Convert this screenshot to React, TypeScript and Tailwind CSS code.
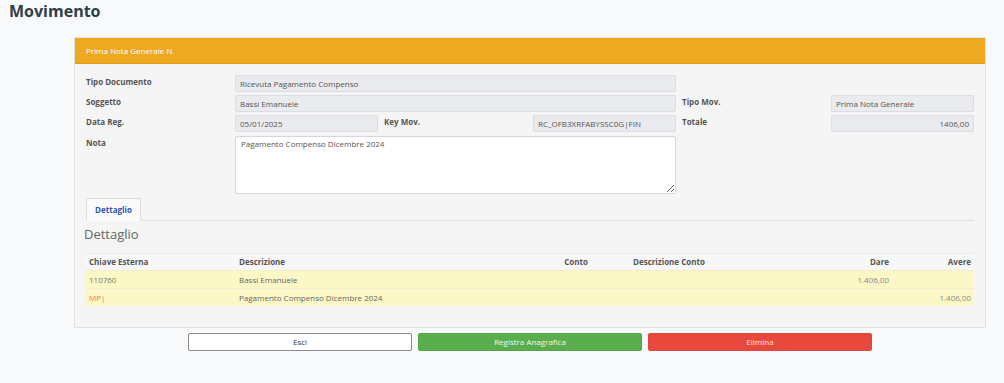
import React from 'react';

const font = { fontFamily: '"Open Sans", "Liberation Sans", sans-serif' };

function Label({ children, className = '' }: { children: React.ReactNode; className?: string }) {
  return (
    <div className={`pt-[1px] text-[8px] leading-[12px] font-bold text-[#555] ${className}`}>{children}</div>
  );
}

function Field({ value, className = '', right = false }: { value: string; className?: string; right?: boolean }) {
  return (
    <div
      className={`h-[17px] flex items-center rounded-[2px] border border-[#dadde1] bg-[#e9ebee] px-[4px] text-[8px] text-[#555] ${right ? 'justify-end' : ''} ${className}`}
    >
      {value}
    </div>
  );
}

export default function App() {
  const rows = [
    { key: '110760', keyColor: 'text-[#777]', desc: 'Bassi Emanuele', dare: '1.406,00', avere: '' },
    { key: 'MP|', keyColor: 'text-[#ee7b52]', desc: 'Pagamento Compenso Dicembre 2024', dare: '', avere: '1.406,00' },
  ];

  return (
    <div style={font} className="min-h-[383px] w-[1004px] bg-[#f8f9fb]">
      <h1 className="pl-[9px] text-[16px] leading-[22px] font-bold text-[#2f3e48]">Movimento</h1>

      <div className="ml-[74px] mt-[15px] w-[912px] border border-[#e2e2e2] bg-[#f5f5f5]">
        {/* header */}
        <div className="h-[26px] flex items-center bg-[#eea920] border-b border-[#e39d12] px-[11px] text-[8px] text-white">
          Prima Nota Generale N.
        </div>

        <div className="px-[11px] pt-[11px] pb-[21px]">
          {/* form */}
          <div className="grid grid-cols-[143px_143px_143px_143px_143px_143px] gap-x-[6px] gap-y-[3px]">
            <Label>Tipo Documento</Label>
            <Field value="Ricevuta Pagamento Compenso" className="col-span-3" />
            <div className="col-span-2" />

            <Label>Soggetto</Label>
            <Field value="Bassi Emanuele" className="col-span-3" />
            <Label>Tipo Mov.</Label>
            <Field value="Prima Nota Generale" />

            <Label>Data Reg.</Label>
            <Field value="05/01/2025" />
            <Label>Key Mov.</Label>
            <Field value="RC_OFB3XRFABYSSC0G|FIN" />
            <Label>Totale</Label>
            <Field value="1406,00" right />

            <Label className="pt-[2px]">Nota</Label>
            <textarea
              readOnly
              defaultValue="Pagamento Compenso Dicembre 2024"
              className="col-span-3 mt-[1px] h-[58px] rounded-[2px] border border-[#d6d6d6] bg-white px-[5px] py-[1px] text-[8px] leading-[12px] text-[#555] outline-none"
            />
          </div>

          {/* tabs */}
          <div className="mt-[4px] flex border-b border-[#dddddd]">
            <div className="-mb-[1px] h-[23px] w-[55px] flex items-center justify-center rounded-t-[2px] border border-[#dddddd] border-b-[#fafafa] bg-[#fafafa] text-[8px] font-bold text-[#2d56b0]">
              Dettaglio
            </div>
          </div>

          <h2 className="mt-[4px] -ml-[2px] text-[13px] leading-[18px] text-[#666]">Dettaglio</h2>

          {/* table */}
          <div className="mt-[10px] text-[8px]">
            <div className="grid grid-cols-[150px_294px_61px_209px_92px_82px] h-[17px] items-center border-t border-[#ebebeb] bg-[#f7f7f7] font-bold text-[#555]">
              <div className="pl-[3px]">Chiave Esterna</div>
              <div className="pl-[3px]">Descrizione</div>
              <div className="pr-[3px] text-right">Conto</div>
              <div className="pl-[42px]">Descrizione Conto</div>
              <div className="pr-[3px] text-right">Dare</div>
              <div className="pr-[3px] text-right">Avere</div>
            </div>
            {rows.map((r, i) => (
              <div
                key={i}
                className="grid grid-cols-[150px_294px_61px_209px_92px_82px] h-[18px] items-center border-t border-[#f1eecf] bg-[#fcf8c6] text-[#666]"
              >
                <div className={`pl-[3px] ${r.keyColor}`}>{r.key}</div>
                <div className="pl-[3px]">{r.desc}</div>
                <div className="pr-[3px] text-right"></div>
                <div className="pl-[42px]"></div>
                <div className="pr-[3px] text-right text-[#888]">{r.dare}</div>
                <div className="pr-[3px] text-right text-[#888]">{r.avere}</div>
              </div>
            ))}
          </div>
        </div>
      </div>

      {/* buttons */}
      <div className="ml-[188px] mt-[5px] flex w-[684px] gap-[6px] text-[8px]">
        <button className="h-[18px] flex-1 rounded-[2px] border-[1.5px] border-[#8a8a8a] bg-white text-[#333]">Esci</button>
        <button className="h-[18px] flex-1 rounded-[2px] border border-[#53a447] bg-[#5aae4d] text-[#eef8ea]">Registra Anagrafica</button>
        <button className="h-[18px] flex-1 rounded-[2px] border border-[#e2453a] bg-[#e9493d] text-[#fde4e1]">Elimina</button>
      </div>
    </div>
  );
}
